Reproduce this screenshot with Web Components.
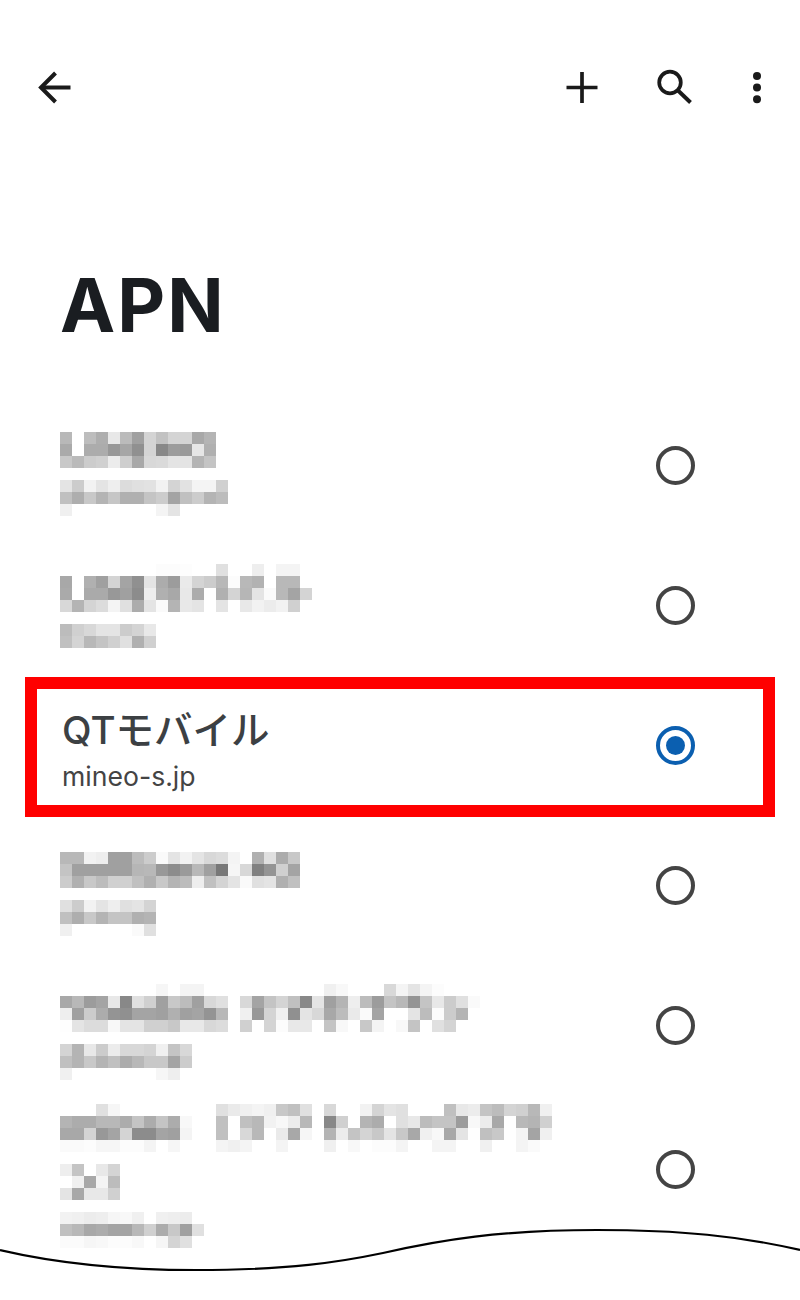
<!DOCTYPE html>
<html lang="ja">
<head>
<meta charset="utf-8">
<title>APN</title>
<style>
  html, body { margin: 0; background: #fff; }
</style>
</head>
<body>
<apn-screen>
  <app-bar>
    <icon-button name="back"></icon-button>
    <span style="flex: 1"></span>
    <icon-button name="add" style="margin-right: 47px"></icon-button>
    <icon-button name="search" style="margin-right: 36px"></icon-button>
    <icon-button name="more"></icon-button>
  </app-bar>
  <page-title>APN</page-title>
  <apn-list>
    <apn-row pad="37">
      <pixel-mosaic rows="b8 ff bd ae e8 bb a0 d4 c2 d4 d4 a8 b4|aa ff ac ac 98 a6 90 d4 88 9c 9a e6 b0|c8 ba cc d0 ec ce a8 d8 da e4 e4 b4 c4"></pixel-mosaic>
      <pixel-mosaic rows="e4 cc f2 e4 ee dc e0 e2 f2 d4 e2 f4 f4 d0|c0 ae c8 b4 c6 b0 b0 c4 cc a4 c0 cc b4 bc|f0 ff ff ff ff ff ff ff f4 e4 ff ff ff ff"></pixel-mosaic>
    </apn-row>
    <apn-row pad="29">
      <pixel-mosaic rows="ff ff ff ff ff ff ff ff fc fc fd ff ff e0 ff ff ee ff f4 f4 ff|a8 ff b0 a0 d4 a4 90 e4 ac 9c ea d4 cc b8 fc b8 b2 ff b8 b8 ff|aa ff aa aa 98 a0 8c ee b0 a8 e8 ac ff b0 d4 b6 e4 fa b8 a4 d4|d8 b4 d4 dc f4 e0 ac e4 fa b4 e8 e4 ff e4 ff e8 f2 ec f2 d0 ff"></pixel-mosaic>
      <pixel-mosaic rows="bc d0 d8 e4 e4 cc d4 e8|c0 d4 b8 c4 d0 e0 b0 d0"></pixel-mosaic>
    </apn-row>
    <apn-row pad="28" selected marked>
      <apn-label name="QTモバイル" host="mineo-s.jp"></apn-label>
    </apn-row>
    <apn-row pad="37">
      <pixel-mosaic rows="b8 b8 f2 ee a0 a0 bc cc fa e4 f2 e4 d8 dc f4 ff b0 e0 ac c8|c4 a0 a0 a0 a0 a0 b6 b8 98 8c 9a b8 a0 78 f6 d8 80 94 d0 a4|cc b0 c8 bc d0 d0 c0 b0 c8 b4 bc ee c0 d4 e4 fa e0 e4 b0 c0"></pixel-mosaic>
      <pixel-mosaic rows="e0 cc f2 e4 ee e0 e4 d4|c0 ae c8 b4 c4 c4 b0 b4|f0 ff ff ff ff ff fa e0"></pixel-mosaic>
    </apn-row>
    <apn-row pad="29">
      <pixel-mosaic rows="ff ff ff ff ff ff ff ff f6 ff f4 f4 ff ff ff ff ff ff ff ff ff ff f0 f8 ff ff ff d8 f4 e4 f4 fc ff ff ff|a8 b8 9c a4 e8 88 e0 d0 a0 c8 bc a0 d8 e0 ff d8 a4 c4 d4 c0 88 e4 a0 b4 ee bc 9c c4 b8 94 c4 e8 cc e0 fa|ee a0 cc ac 94 90 a4 a4 a0 b0 a0 a4 94 b8 ff f0 98 d4 f0 90 e4 d8 a8 bc ea fa a4 ff ff e4 bc fc cc b4 ff|fe e4 dc dc f8 e4 e4 d0 d0 c8 e8 e8 d8 dc ff d0 ff d4 fc e8 e8 ff c4 f8 ff c8 f4 ff f8 c4 ff e0 d4 ff ff"></pixel-mosaic>
      <pixel-mosaic rows="d4 b4 e8 cc ec d8 d8 d4 f0 c4 d8|c0 b4 c8 b4 c0 ac b8 c8 c8 a4 cc|f0 ff ff ff ff ff ff ff f6 ee ff"></pixel-mosaic>
    </apn-row>
    <apn-row pad="9" h="148">
      <pixel-mosaic rows="ff ff ff e0 f6 ff ff ff ff ff ff ff ff e0 ea f0 f4 f0 c8 c0 e0 ff d8 ff ff f2 d4 e4 e0 ff ff ff c0 e8 ec c4 bc d4 d0 b8 f0|b4 ac ac b8 b8 ac c4 ac c4 ac f8 ff ff c0 ff c0 b8 f2 f8 ec b8 ff 88 d0 ff b4 ac ff e0 e8 bc c4 c4 9c f8 ec a8 fe b8 b4 d0|a8 a8 d4 98 a4 d4 8c 8c a4 a0 f4 ff ff c0 ff d8 b8 ff ea a8 f6 ff b4 ec c4 d4 c8 e4 c8 a8 f0 f8 a8 e4 fe c0 c8 fe f4 a4 f0|fa fa fc f6 f6 fc fc f4 ff f6 ff ff ff f4 f0 f4 ff ff f4 ff ff ff f0 ff f8 ff fc fc f4 ff ff f4 f4 ff ff f0 ff ff f4 fa ff"></pixel-mosaic>
      <pixel-mosaic rows="ee c4 ff e8 d4|ff f0 a8 f4 bc|e4 a8 e8 e8 d0"></pixel-mosaic>
      <pixel-mosaic rows="f2 f0 ec ee f6 f8 f0 ff f0 ee ec ff|c0 b8 a8 ac a4 a4 b8 d0 ac c8 a0 e0|fb fb f6 f8 fc fc f8 ff f6 d4 e0 ff"></pixel-mosaic>
    </apn-row>
  </apn-list>
  <wave-edge></wave-edge>
</apn-screen>

<script>
const iconPaths = {
    back: '<path d="M10 23.5H38.5" stroke-width="4"/><path d="M23.5 9 9 23.5 23.5 38" stroke-width="4"/>',
    add: '<path d="M7.5 23.5h31M23 8v31" stroke-width="3.7"/>',
    search: '<circle cx="18" cy="18.5" r="10.8" stroke-width="3.7"/><path d="M26 26.5 38.5 38.5" stroke-width="3.9"/>',
    more: '<circle cx="23" cy="12" r="4" fill="currentColor" stroke="none"/><circle cx="23" cy="23.5" r="4" fill="currentColor" stroke="none"/><circle cx="23" cy="35.3" r="4" fill="currentColor" stroke="none"/>'
};

class ApnScreen extends HTMLElement {
    constructor() {
        super();
        this.attachShadow({ mode: 'open' });
    }

    connectedCallback() {
        this.shadowRoot.innerHTML = `
    <style>
      :host {
        display: block;
        position: relative;
        width: 800px;
        height: 1300px;
        overflow: hidden;
        background: #fff;
        font-family: Inter, "Noto Sans CJK JP", sans-serif;
      }
    </style>
    <slot></slot>
  `;
    }
}

class AppBar extends HTMLElement {
    constructor() {
        super();
        this.attachShadow({ mode: 'open' });
    }

    connectedCallback() {
        this.shadowRoot.innerHTML = `
    <style>
      :host {
        display: flex;
        align-items: center;
        box-sizing: border-box;
        height: 110px;
        padding: 64px 20px 0 32px;
        color: #1a1a1a;
      }
    </style>
    <slot></slot>
  `;
    }
}

class IconButton extends HTMLElement {
    constructor() {
        super();
        this.attachShadow({ mode: 'open' });
    }

    connectedCallback() {
        const name = this.getAttribute('name');
        this.shadowRoot.innerHTML = `
    <style>
      :host {
        display: block;
        width: 46px;
        height: 46px;
      }

      svg {
        display: block;
        overflow: visible;
      }
    </style>
    <svg width="46" height="46" viewBox="0 0 46 46" fill="none" stroke="currentColor">${iconPaths[name]}</svg>
  `;
    }
}

class PageTitle extends HTMLElement {
    constructor() {
        super();
        this.attachShadow({ mode: 'open' });
    }

    connectedCallback() {
        this.shadowRoot.innerHTML = `
    <style>
      :host {
        display: block;
        box-sizing: border-box;
        height: 285px;
        padding: 150px 0 0 60px;
        color: #1a1d21;
        font-size: 74px;
        font-weight: 700;
        letter-spacing: 2px;
        line-height: 90px;
      }
    </style>
    <slot></slot>
  `;
    }
}

class ApnList extends HTMLElement {
    constructor() {
        super();
        this.attachShadow({ mode: 'open' });
    }

    connectedCallback() {
        this.shadowRoot.innerHTML = `
    <style>
      :host {
        display: flex;
        flex-direction: column;
      }
    </style>
    <slot></slot>
  `;
    }
}

class ApnRow extends HTMLElement {
    constructor() {
        super();
        this.attachShadow({ mode: 'open' });
    }

    connectedCallback() {
        const pad = this.getAttribute('pad') || 30;
        const height = this.getAttribute('h') || 140;
        const selected = this.hasAttribute('selected');
        this.shadowRoot.innerHTML = `
    <style>
      :host {
        display: flex;
        align-items: center;
        position: relative;
        box-sizing: border-box;
        height: ${height}px;
        padding: 0 105px 0 60px;
      }

      .text {
        flex: 1;
        align-self: flex-start;
        display: flex;
        flex-direction: column;
        gap: 12px;
        padding-top: ${pad}px;
      }

      /* red marker drawn over the row */
      :host([marked])::after {
        content: '';
        position: absolute;
        left: 25px;
        right: 25px;
        top: 2px;
        height: 140px;
        box-sizing: border-box;
        border: 12px solid #f00;
      }
    </style>
    <div class="text"><slot></slot></div>
    <radio-mark ${selected ? 'checked' : ''}></radio-mark>
  `;
    }
}

class ApnLabel extends HTMLElement {
    constructor() {
        super();
        this.attachShadow({ mode: 'open' });
    }

    connectedCallback() {
        this.shadowRoot.innerHTML = `
    <style>
      :host {
        display: block;
        padding-left: 2px;
      }

      .name {
        color: #3c4043;
        font-size: 38.5px;
        font-weight: 500;
        line-height: 54px;
      }

      .host {
        color: #444;
        font-size: 26.6px;
        line-height: 38px;
      }
    </style>
    <div class="name">${this.getAttribute('name')}</div>
    <div class="host">${this.getAttribute('host')}</div>
  `;
    }
}

class RadioMark extends HTMLElement {
    constructor() {
        super();
        this.attachShadow({ mode: 'open' });
    }

    connectedCallback() {
        const checked = this.hasAttribute('checked');
        this.shadowRoot.innerHTML = `
    <style>
      :host {
        display: grid;
        place-items: center;
        flex: none;
        box-sizing: border-box;
        width: 39px;
        height: 39px;
        margin-right: 0;
        border: 4px solid ${checked ? '#0b5fb0' : '#444'};
        border-radius: 50%;
      }

      .dot {
        width: 19px;
        height: 19px;
        border-radius: 50%;
        background: #0b5fb0;
      }
    </style>
    ${checked ? '<div class="dot"></div>' : ''}
  `;
    }
}

class PixelMosaic extends HTMLElement {
    constructor() {
        super();
        this.attachShadow({ mode: 'open' });
    }

    connectedCallback() {
        const rows = this.getAttribute('rows').split('|').map(row => row.split(' '));
        this.shadowRoot.innerHTML = `
    <style>
      :host {
        display: grid;
        grid-auto-rows: 12px;
        grid-template-columns: repeat(${rows[0].length}, 12px);
      }
    </style>
  `;
        rows.forEach(row => {
            row.forEach(grey => {
                const cell = document.createElement('div');
                cell.style.background = `#${grey}${grey}${grey}`;
                this.shadowRoot.appendChild(cell);
            });
        });
    }
}

class WaveEdge extends HTMLElement {
    constructor() {
        super();
        this.attachShadow({ mode: 'open' });
    }

    connectedCallback() {
        this.shadowRoot.innerHTML = `
    <style>
      /* torn edge lying over the bottom of the list */
      :host {
        display: block;
        position: absolute;
        left: 0;
        top: 1220px;
      }

      svg {
        display: block;
      }
    </style>
    <svg width="800" height="80" viewBox="0 1220 800 80" fill="none">
      <path d="M0 1250C60 1264 120 1270 196 1270C290 1270 340 1262 383 1253C440 1240 500 1230 597 1230C680 1230 740 1236 800 1250" stroke="#000" stroke-width="2.2"/>
    </svg>
  `;
    }
}

customElements.define('apn-screen', ApnScreen);
customElements.define('app-bar', AppBar);
customElements.define('icon-button', IconButton);
customElements.define('page-title', PageTitle);
customElements.define('apn-list', ApnList);
customElements.define('apn-row', ApnRow);
customElements.define('apn-label', ApnLabel);
customElements.define('radio-mark', RadioMark);
customElements.define('pixel-mosaic', PixelMosaic);
customElements.define('wave-edge', WaveEdge);
</script>
</body>
</html>
